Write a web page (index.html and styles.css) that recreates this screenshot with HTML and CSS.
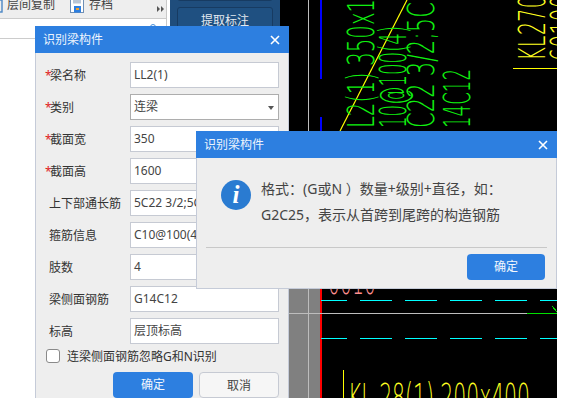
FILE: index.html
```html
<!DOCTYPE html>
<html lang="zh-CN">
<head>
<meta charset="utf-8">
<title>识别梁构件</title>
<link rel="stylesheet" href="styles.css">
</head>
<body>
<div class="screen">
  <div class="pane">
    <div class="pane-inner">
      <div class="toolbar">
        <svg class="tb-icon tb-copy" viewBox="0 0 14 14"><rect x="1" y="1" width="12" height="12" fill="none" stroke="#4a86c5" stroke-width="1.4"/></svg>
        <span class="tb-text">层间复制</span>
        <svg class="tb-icon tb-save" viewBox="0 0 14 14"><rect x="0.5" y="0.5" width="13" height="13" fill="#fff" stroke="#6f8fb5"/><rect x="3" y="0.5" width="8" height="4" fill="#b9c6d6"/><rect x="4" y="7" width="7" height="6.5" fill="#2d7fe0"/><rect x="6" y="9" width="3" height="2" fill="#f0a030"/></svg>
        <span class="tb-text">存档</span>
        <span class="tb-more"><i class="tri"></i><i class="tri"></i></span>
      </div>
      <div class="pane-row"><i class="peek"></i></div>
    </div>
  </div>

  <div class="nav">
    <div class="nav-btn nav-prev"></div>
    <div class="nav-btn">提取标注</div>
  </div>

  <svg class="cad" viewBox="280 0 277 398" width="277" height="398" aria-label="CAD drawing">
    <rect class="gutter" x="289" y="140" width="31" height="258"/>
    <line class="c-grey" x1="308.5" y1="0" x2="308.5" y2="398"/>
    <line class="c-blue" x1="320.5" y1="0" x2="320.5" y2="79"/>
    <line class="c-blue" x1="320.5" y1="117" x2="320.5" y2="140"/>
    <line class="c-red" x1="320.5" y1="140" x2="320.5" y2="398"/>
    <line class="c-diagonal" x1="340" y1="131" x2="407" y2="0"/>

    <g class="cad-text t-green">
      <text transform="translate(374 128) rotate(-90)" textLength="129" lengthAdjust="spacingAndGlyphs">L2(1) 350x1</text>
      <text transform="translate(406 128) rotate(-90)" textLength="102" lengthAdjust="spacingAndGlyphs">10@100(4)</text>
      <text transform="translate(434 128) rotate(-90)" textLength="126" lengthAdjust="spacingAndGlyphs">C22 3/2;5C</text>
      <text transform="translate(470 128) rotate(-90)" textLength="59" lengthAdjust="spacingAndGlyphs">14C12</text>
    </g>
    <g class="cad-text t-yellow">
      <text transform="translate(545 61) rotate(-90)" textLength="66" lengthAdjust="spacingAndGlyphs">KL270</text>
      <text transform="translate(577 61) rotate(-90)" textLength="66" lengthAdjust="spacingAndGlyphs">60100</text>
      <text x="348" y="410" textLength="182" lengthAdjust="spacingAndGlyphs">KL 28(1) 200x400</text>
    </g>
    <text class="cad-text t-pink" x="328" y="294" textLength="48" lengthAdjust="spacingAndGlyphs">0010</text>

    <line class="c-yellow" x1="513" y1="68.5" x2="557" y2="68.5"/>
    <line class="c-yellow" x1="343.5" y1="370" x2="343.5" y2="398"/>
    <line class="c-grey" x1="289" y1="313.5" x2="527" y2="313.5"/>
    <line class="c-green" x1="527" y1="313.5" x2="557" y2="313.5"/>
    <line class="c-green" x1="552" y1="306" x2="557" y2="312"/>
    <path class="c-cyan" d="M321 300.5H347M360 300.5H392M405 300.5H437M450 300.5H482M495 300.5H527M540 300.5H557M321 338.5H347M360 338.5H392M405 338.5H437M450 338.5H482M495 338.5H527M540 338.5H557"/>
  </svg>

  <section class="dialog dialog-form">
    <header class="dialog-head"><span>识别梁构件</span><svg class="close" viewBox="0 0 10 10"><path d="M1 1L9 9M9 1L1 9"/></svg></header>
    <div class="form">
      <div class="form-row"><label class="req">梁名称</label><div class="field">LL2(1)</div></div>
      <div class="form-row"><label class="req">类别</label><div class="field field-select">连梁<i class="caret"></i></div></div>
      <div class="form-row"><label class="req">截面宽</label><div class="field">350</div></div>
      <div class="form-row"><label class="req">截面高</label><div class="field">1600</div></div>
      <div class="form-row"><label>上下部通长筋</label><div class="field">5C22 3/2;5C22 2/3</div></div>
      <div class="form-row"><label>箍筋信息</label><div class="field">C10@100(4)</div></div>
      <div class="form-row"><label>肢数</label><div class="field">4</div></div>
      <div class="form-row"><label>梁侧面钢筋</label><div class="field">G14C12</div></div>
      <div class="form-row"><label>标高</label><div class="field">层顶标高</div></div>
      <div class="check-row"><i class="checkbox"></i><span>连梁侧面钢筋忽略G和N识别</span></div>
      <div class="actions">
        <div class="btn btn-primary">确定</div>
        <div class="btn btn-plain">取消</div>
      </div>
    </div>
  </section>

  <section class="dialog dialog-msg">
    <header class="dialog-head"><span>识别梁构件</span><svg class="close" viewBox="0 0 10 10"><path d="M1 1L9 9M9 1L1 9"/></svg></header>
    <div class="msg-body">
      <div class="info-icon">i</div>
      <div class="msg-text">
        <p>格式：(G或N ）数量+级别+直径，如：</p>
        <p>G2C25，表示从首跨到尾跨的构造钢筋</p>
      </div>
    </div>
    <div class="msg-foot"><div class="btn btn-primary btn-ok">确定</div></div>
  </section>
</div>
</body>
</html>
```

FILE: styles.css
```css
* { box-sizing: border-box; }
html, body { margin: 0; background: #fff; }
body { font: 12px/17px "Noto Sans", "Noto Sans CJK SC", sans-serif; color: #333; }
.screen { position: relative; width: 557px; height: 398px; overflow: hidden; display: flex; background: #000; }

/* left pane */
.pane { width: 170px; flex: none; background: #fff; }
.pane-inner { width: 167px; height: 100%; border-right: 1px solid #c9c9c9; }
.toolbar { height: 19px; padding-bottom: 5px; display: flex; align-items: flex-end; overflow: hidden; background: #eee; border-bottom: 1px solid #ccc; position: relative; }
.tb-icon { width: 14px; height: 14px; flex: none; }
.tb-copy { margin-left: -11px; margin-right: 4px; }
.tb-save { margin-left: 15px; margin-right: 5px; }
.tb-text { flex: none; color: #444; }
.tb-more { margin-left: auto; margin-right: 2px; margin-bottom: 1px; display: flex; gap: 1px; }
.tri { width: 0; height: 0; border-left: 3px solid #555; border-top: 3px solid transparent; border-bottom: 3px solid transparent; }
.pane-row { height: 20px; border-bottom: 1px solid #ccc; position: relative; }
.peek { position: absolute; left: 150px; top: 5px; width: 6px; height: 6px; border: 1px solid #4a90d9; border-radius: 50%; }

/* navy side panel */
.nav { width: 110px; flex: none; background: #1f4d7c; padding: 0 7px; display: flex; flex-direction: column; gap: 6px; }
.nav-btn { height: 26px; flex: none; border: 1px solid #173b62; border-radius: 3px; background: #1f5081; color: #e3e9f0; text-align: center; line-height: 25px; }
.nav-prev { margin-top: -25px; }

/* CAD drawing */
.cad { flex: none; display: block; background: #000; }
.gutter { fill: #808080; }
.cad line, .cad path { fill: none; stroke-width: 1; shape-rendering: crispEdges; }
.c-yellow { stroke: #ff0; }
.cad .c-diagonal { stroke: #ff0; shape-rendering: auto; stroke-width: 1.2; }
.c-grey { stroke: #bdbdbd; }
.cad .c-blue { stroke: #0000ff; stroke-width: 2; }
.cad .c-red { stroke: #ff0000; stroke-width: 2; }
.c-green { stroke: #00e000; }
.c-cyan { stroke: #00ffff; }
.cad-text { font-family: "DejaVu Sans", sans-serif; font-weight: 200; font-size: 37px; }
.t-green { fill: #10f010; }
.t-yellow { fill: #ffff20; }
.t-pink { fill: #ff8f8f; }

/* dialogs */
.dialog { position: absolute; background: #eee; border: 1px solid #c5cbd8; border-top: 0; }
.dialog-head { height: 27px; margin: 0 -1px; padding: 0 9px 0 8px; background: #2d7fe0; color: #eef5fd; display: flex; align-items: center; justify-content: space-between; }
.close { width: 10px; height: 10px; fill: none; stroke: #fff; stroke-width: 1.6; }
.dialog-form { left: 35px; top: 26px; width: 254px; height: 374px; }
.dialog-msg { left: 196px; top: 131px; width: 361px; height: 158px; }

/* form */
.form { padding: 9px 9px 0; display: flex; flex-direction: column; gap: 6px; }
.form-row { display: flex; height: 26px; align-items: center; }
.form-row label { width: 85px; flex: none; padding-left: 4px; }
.form-row label.req { padding-left: 0; }
.req::before { content: "*"; color: #e02020; display: inline-block; width: 5px; }
.field { flex: 1; height: 26px; line-height: 24px; padding: 0 2px 0 3px; background: #fff; border: 1px solid #c6cad3; white-space: nowrap; overflow: hidden; position: relative; color: #444; }
.field-select { border-color: #adadad; }
.caret { position: absolute; right: 4px; top: 11px; border-top: 4px solid #555; border-left: 3px solid transparent; border-right: 3px solid transparent; }
.check-row { display: flex; align-items: center; height: 14px; margin-top: -1px; padding-left: 1px; gap: 7px; }
.checkbox { width: 14px; height: 14px; flex: none; background: #fff; border: 1px solid #8a8a8a; border-radius: 3px; }
.actions { display: flex; justify-content: flex-end; gap: 6px; margin-top: 3px; }

/* buttons */
.btn { width: 80px; height: 26px; border-radius: 4px; text-align: center; line-height: 25px; }
.btn-primary { background: #2d7fe0; color: #f2f7fd; }
.btn-plain { background: #f6f6f6; border: 1px solid #c6cad3; color: #444; }

/* message */
.msg-body { display: flex; padding: 18px 0 0 24px; height: 89px; }
.info-icon { width: 30px; height: 30px; margin-top: 4px; flex: none; border-radius: 50%; background: #2a7bd1; color: #fff; font: italic bold 25px/30px "Liberation Serif", serif; text-align: center; }
.msg-text { margin-left: 10px; font-family: "Noto Sans", "Noto Sans CJK JP", sans-serif; font-size: 14px; line-height: 26px; color: #444; white-space: nowrap; }
.msg-text p { margin: 0; }
.msg-foot { margin: 0 9px; border-top: 1px solid #c8c8c8; padding: 6px 2px 0 0; display: flex; justify-content: flex-end; }
.btn-ok { width: 78px; }
```
